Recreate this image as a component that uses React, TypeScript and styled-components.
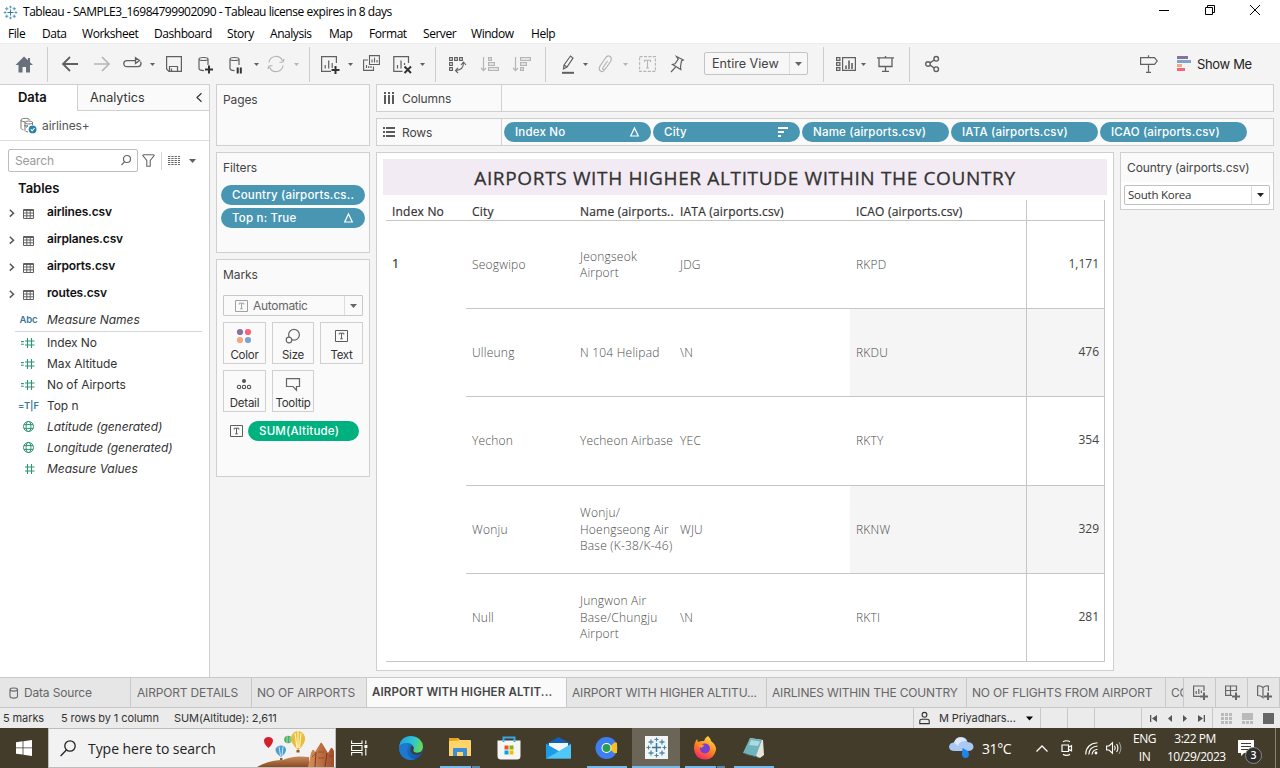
import React from "react";
import styled, { createGlobalStyle, css } from "styled-components";

const UI = '"Inter", "Liberation Sans", sans-serif';
const WIN = '"Open Sans", "Noto Sans", sans-serif';
const LINE = "#cfcfcf";
const BLUE = "#4996b2";
const GREEN = "#00b180";

const Global = createGlobalStyle`
  * { box-sizing: border-box; }
  html, body { margin: 0; padding: 0; overflow: hidden; }
  body { font-family: ${UI}; font-size: 12px; color: #333; background: #fff; }
  svg { display: block; flex: none; overflow: visible; }
`;

const Window = styled.div`
  width: 1280px;
  height: 768px;
  display: flex;
  flex-direction: column;
  background: #f4f4f4;
  white-space: nowrap;
  overflow: hidden;
`;

/* ---------- title bar and menu ---------- */
const TitleBar = styled.header`
  height: 24px;
  flex: none;
  display: flex;
  align-items: center;
  padding-left: 3px;
  background: #fff;
`;
const TitleText = styled.span`
  font: 12px/24px ${WIN};
  letter-spacing: -0.46px;
  color: #000;
  margin-left: 5px;
  flex: 1;
`;
const WindowButtons = styled.div`
  display: flex;
  gap: 35.5px;
  padding-right: 20px;
  margin-top: -4px;
`;
const MenuBar = styled.nav`
  height: 19px;
  flex: none;
  display: flex;
  background: #fff;
`;
const MenuItem = styled.span<{ $w: number }>`
  width: ${(p) => p.$w}px;
  font: 12px/19px ${WIN};
  letter-spacing: -0.45px;
  color: #000;
`;

/* ---------- toolbar ---------- */
const ToolBar = styled.div`
  height: 41px;
  flex: none;
  display: flex;
  align-items: center;
  border-top: 1px solid #ececec;
  background: #f4f4f4;
`;
const Tool = styled.span<{ $gap: number; $dim?: boolean }>`
  margin-left: ${(p) => p.$gap}px;
  color: ${(p) => (p.$dim ? "#b5b5b5" : "#606060")};
  flex: none;
`;
const Divider = styled.span<{ $gap: number }>`
  width: 1px;
  height: 35px;
  margin-left: ${(p) => p.$gap}px;
  background: #cdcdcd;
  flex: none;
`;
const FitSelect = styled.div`
  width: 104px;
  height: 23px;
  margin: -1px 0 0 20px;
  display: flex;
  border: 1px solid #c3c3c3;
  border-radius: 2px;
  background: #f7f7f7;
  font-size: 12.6px;
  line-height: 21px;
  color: #444;
  padding-left: 7px;
  flex: none;
`;
const FitLabel = styled.span`
  flex: 1;
`;
const SelectArrow = styled.span<{ $w: number; $dark?: boolean }>`
  width: ${(p) => p.$w}px;
  border-left: 1px solid #ddd;
  display: flex;
  align-items: center;
  justify-content: center;
  color: ${(p) => (p.$dark ? "#222" : "#666")};
`;
const ShowMe = styled.span`
  margin: -1px 0 0 6px;
  font-size: 13px;
  letter-spacing: -0.35px;
  color: #222;
`;

/* ---------- main area ---------- */
const Main = styled.main`
  height: 593px;
  flex: none;
  display: flex;
`;
const SidePane = styled.aside`
  width: 210px;
  flex: none;
  background: #fff;
  border-top: 1px solid ${LINE};
  border-right: 1px solid ${LINE};
`;
const PaneTabs = styled.div`
  display: flex;
  height: 26px;
`;
const ActivePaneTab = styled.div`
  width: 77px;
  padding-left: 18px;
  font-weight: 600;
  font-size: 13px;
  line-height: 25px;
  color: #111;
  letter-spacing: -0.1px;
`;
const PaneTab = styled.div`
  flex: 1;
  display: flex;
  align-items: center;
  justify-content: space-between;
  padding: 0 7px 0 12px;
  font-size: 12.6px;
  color: #333;
  background: #fafafa;
  border-left: 1px solid ${LINE};
  border-bottom: 1px solid ${LINE};
`;
const SourceRow = styled.div`
  height: 30px;
  display: flex;
  align-items: center;
  gap: 5px;
  padding-left: 20px;
  border-bottom: 1px solid #dedede;
  font-size: 12px;
  letter-spacing: -0.1px;
  color: #555;
`;
const SearchRow = styled.div`
  display: flex;
  align-items: center;
  padding: 8px 0 0 8px;
  color: #666;
`;
const SearchBox = styled.div`
  width: 130px;
  height: 23px;
  display: flex;
  align-items: center;
  justify-content: space-between;
  padding: 0 6px 0 6px;
  margin-right: 4px;
  border: 1px solid #bdbdbd;
  border-radius: 2px;
  color: #9a9a9a;
  font-size: 12px;
  letter-spacing: -0.15px;
`;
const Bar = styled.span`
  width: 1px;
  height: 18px;
  margin: 0 6px 0 6px;
  background: #d5d5d5;
`;
const TablesHeading = styled.h2`
  margin: 4px 0 0 18px;
  font-size: 13px;
  line-height: 24px;
  font-weight: 600;
  color: #111;
`;
const TableList = styled.div`
  padding-bottom: 1px;
`;
const TableItem = styled.div`
  height: 27px;
  display: flex;
  align-items: center;
  gap: 9px;
  padding-left: 9px;
  color: #606060;
`;
const TableName = styled.span`
  margin: -4px 0 0 4px;
  font-size: 12px;
  font-weight: 600;
  color: #111;
  letter-spacing: -0.15px;
`;
const Field = styled.div<{ $italic?: boolean }>`
  height: 21px;
  display: flex;
  align-items: center;
  font-size: 12px;
  letter-spacing: ${(p) => (p.$italic ? "-0.05px" : "-0.08px")};
  font-style: ${(p) => (p.$italic ? "italic" : "normal")};
  color: #333;
`;
const FieldIcon = styled.span<{ $color: string }>`
  width: 47px;
  display: flex;
  justify-content: center;
  padding-left: 10px;
  font: 600 9.5px ${UI};
  color: ${(p) => p.$color};
`;
const FieldRule = styled.div`
  height: 1px;
  margin: 1px 7px 0 15px;
  background: #d6d6d6;
`;

/* ---------- cards ---------- */
const CardColumn = styled.section`
  width: 154px;
  margin: 0 6px;
  flex: none;
  display: flex;
  flex-direction: column;
`;
const Card = styled.div<{ $h: number; $gap?: number }>`
  height: ${(p) => p.$h}px;
  margin-top: ${(p) => p.$gap ?? 0}px;
  border: 1px solid ${LINE};
  background: #fafafa;
`;
const CardTitle = styled.div`
  height: 32px;
  padding: 7px 0 0 6px;
  font-size: 12px;
  line-height: 16px;
  letter-spacing: -0.1px;
  color: #444;
`;
const Pill = styled.div<{ $w: number; $green?: boolean }>`
  width: ${(p) => p.$w}px;
  height: 20px;
  flex: none;
  display: flex;
  align-items: center;
  justify-content: space-between;
  padding: 0 12px 0 11px;
  border-radius: 10px;
  background: ${(p) => (p.$green ? GREEN : BLUE)};
  color: #fff;
  font-size: 11.5px;
  font-weight: 500;
  letter-spacing: 0.2px;
`;
const FilterPills = styled.div`
  display: flex;
  flex-direction: column;
  gap: 3px;
  padding-left: 4px;
`;
const MarkSelect = styled.div`
  width: 140px;
  height: 21px;
  margin: 3px 0 6px 6px;
  display: flex;
  align-items: center;
  border: 1px solid #c8c8c8;
  border-radius: 1px;
  padding-left: 11px;
  color: #666;
`;
const MarkType = styled.span`
  flex: 1;
  margin-left: 5px;
  letter-spacing: -0.3px;
`;
const MarkArrow = styled(SelectArrow)`
  align-self: stretch;
`;
const MarkGrid = styled.div`
  display: grid;
  grid-template-columns: 43px 42px 43px;
  grid-auto-rows: 42px;
  column-gap: 6px;
  row-gap: 6px;
  padding-left: 6px;
`;
const MarkButton = styled.div`
  display: flex;
  flex-direction: column;
  align-items: center;
  border: 1px solid ${LINE};
  padding-top: 4px;
  font-size: 11.5px;
  line-height: 15px;
  letter-spacing: -0.25px;
  color: #333;
  svg { margin: 0 1px 3px 0; }
`;
const MarkRow = styled.div`
  display: flex;
  align-items: center;
  gap: 5px;
  padding: 9px 0 0 13px;
`;

/* ---------- shelves ---------- */
const Work = styled.section`
  width: 898px;
  flex: none;
  display: flex;
  flex-direction: column;
  gap: 6px;
`;
const Shelf = styled.div`
  height: 28px;
  display: flex;
  border: 1px solid ${LINE};
  background: #fafafa;
`;
const ShelfName = styled.div`
  width: 125px;
  border-right: 1px solid ${LINE};
  display: flex;
  align-items: center;
  gap: 7px;
  padding-left: 6px;
  font-size: 12px;
  letter-spacing: -0.1px;
  color: #444;
`;
const ShelfPills = styled.div`
  display: flex;
  align-items: center;
  gap: 2px;
  padding-left: 2px;
`;
const ViewRow = styled.div`
  display: flex;
  align-items: flex-start;
  gap: 6px;
`;
const View = styled.div`
  width: 738px;
  height: 519px;
  border: 1px solid ${LINE};
  background: #fff;
  padding: 6px;
`;
const ViewTitle = styled.h1`
  margin: 0 0 5px;
  height: 36px;
  background: #f2ebf3;
  text-align: center;
  font: 500 19px/38px ${WIN};
  letter-spacing: 0.65px;
  -webkit-text-stroke: 0.3px #333;
  color: #333;
`;
const Grid = styled.div`
  display: grid;
  width: 719px;
  margin-left: 3px;
  grid-template-columns: 80px 108px 100px 176px 176px 79px;
  grid-template-rows: 21px 88px 88px 89px 88px 88px;
  font-family: ${WIN};
`;
const Head = styled.div<{ $value?: boolean }>`
  padding-left: 6px;
  font: 500 12px/24px ${WIN};
  letter-spacing: 0.2px;
  -webkit-text-stroke: 0.2px #333;
  color: #333;
  border-bottom: 1px solid #c6c6c6;
  ${(p) => p.$value && css`border-left: 1px solid #c6c6c6; border-right: 1px solid #c6c6c6;`}
`;
const IndexCell = styled.div`
  grid-row: 2 / 7;
  padding: 34px 0 0 6px;
  font: 500 12.5px/18px ${WIN};
  color: #333;
  -webkit-text-stroke: 0.2px #333;
  border-bottom: 1px solid #c6c6c6;
`;
const Cell = styled.div<{ $shade?: boolean; $value?: boolean }>`
  display: flex;
  align-items: center;
  padding: 1px 0 0 6px;
  font: 300 12px/16.5px ${WIN};
  letter-spacing: 0.22px;
  color: #4c4c4c;
  white-space: pre;
  border-bottom: 1px solid #c6c6c6;
  background: ${(p) => (p.$shade ? "#f5f5f5" : "transparent")};
  ${(p) => p.$value && css`
    justify-content: flex-end;
    padding: 0 5px 1px 0;
    font-weight: 400;
    letter-spacing: 0;
    color: #444;
    border-left: 1px solid #c6c6c6;
    border-right: 1px solid #c6c6c6;
  `}
`;
const FilterCard = styled.div`
  width: 154px;
  height: 58px;
  border: 1px solid ${LINE};
  background: #fff;
`;
const FilterTitle = styled.div`
  height: 29px;
  padding-left: 6px;
  background: #fafafa;
  line-height: 30px;
  letter-spacing: -0.1px;
  color: #444;
`;
const CountrySelect = styled.div`
  width: 146px;
  height: 20px;
  margin: 3px 0 0 3px;
  padding-left: 3px;
  display: flex;
  justify-content: space-between;
  border: 1px solid #c0c0c0;
  border-radius: 2px;
  font: 11.5px/18px ${WIN};
  letter-spacing: -0.25px;
  color: #333;
`;

/* ---------- sheet tabs and status ---------- */
const Sheets = styled.div`
  height: 31px;
  flex: none;
  display: flex;
  border-top: 1px solid #c8c8c8;
  border-bottom: 1px solid #c8c8c8;
  background: #e6e6e6;
`;
const Sheet = styled.div<{ $w: number; $pad?: number; $active?: boolean }>`
  width: ${(p) => p.$w}px;
  flex: none;
  display: flex;
  align-items: center;
  gap: 5px;
  padding-left: ${(p) => p.$pad ?? 5}px;
  overflow: hidden;
  border-right: 1px solid #c8c8c8;
  font-size: 12px;
  letter-spacing: -0.17px;
  color: #666;
  ${(p) => p.$active && css`
    background: #fafafa;
    color: #444;
    font-weight: 600;
    font-size: 11.5px;
    letter-spacing: 0.14px;
    padding-bottom: 2px;
  `}
`;
const Status = styled.div`
  height: 20px;
  flex: none;
  display: flex;
  background: #ebebeb;
  font-size: 11px;
  line-height: 20px;
  letter-spacing: -0.1px;
  color: #333;
`;
const StatusText = styled.span<{ $w: number; $pad?: number }>`
  width: ${(p) => p.$w}px;
  padding-left: ${(p) => p.$pad ?? 0}px;
`;
const StatusCell = styled.div<{ $w: number; $pad?: number; $gap?: number }>`
  width: ${(p) => p.$w}px;
  display: flex;
  align-items: center;
  gap: ${(p) => p.$gap ?? 0}px;
  padding-left: ${(p) => p.$pad ?? 0}px;
  border-left: 1px solid #c8c8c8;
`;
const UserName = styled.span`
  width: 78px;
  font-size: 11px;
`;

/* ---------- Windows taskbar ---------- */
const TaskBar = styled.footer`
  height: 40px;
  flex: none;
  display: flex;
  align-items: center;
  background: #433c2a;
  color: #fff;
  font-family: ${WIN};
`;
const StartButton = styled.div`
  width: 48px;
  display: flex;
  justify-content: center;
`;
const SearchField = styled.div`
  width: 288px;
  height: 40px;
  display: flex;
  align-items: center;
  padding-left: 11px;
  background: #f2f2f2;
  border: 1px solid #bdbdbd;
  color: #222;
  font-size: 14px;
`;
const SearchHint = styled.span`
  width: 167px;
  margin-left: 12px;
  letter-spacing: -0.05px;
`;
const TaskView = styled.div`
  width: 51px;
  padding-left: 15px;
`;
const Apps = styled.div`
  display: flex;
  gap: 1px;
`;
const TaskApp = styled.div<{ $active?: boolean }>`
  width: 48px;
  height: 40px;
  display: flex;
  flex-direction: column;
  align-items: center;
  justify-content: space-between;
  padding-top: 8px;
  background: ${(p) => (p.$active ? "#6b6557" : "transparent")};
`;
const Underline = styled.span<{ $w: number; $split?: boolean }>`
  width: ${(p) => p.$w}px;
  height: 2px;
  background: ${(p) => (p.$split ? "linear-gradient(90deg,#76b9ed 31px,#433c2a 31px,#433c2a 32px,#5a87aa 32px)" : "#76b9ed")};
`;
const Tray = styled.div`
  margin-left: auto;
  display: flex;
  align-items: center;
  height: 40px;
`;
const Temp = styled.span`
  width: 54px;
  margin-left: 8px;
  font-size: 14px;
  letter-spacing: -0.4px;
`;
const TrayText = styled.div<{ $w: number }>`
  width: ${(p) => p.$w}px;
  text-align: center;
  font-size: 12px;
  line-height: 18px;
  letter-spacing: -0.5px;
`;
const Notice = styled.div`
  position: relative;
  width: 37px;
`;
const Count = styled.span`
  position: absolute;
  left: 7px;
  top: 7px;
  width: 17px;
  height: 17px;
  border-radius: 9px;
  border: 1px solid #8a8a8a;
  background: #2f2f2f;
  color: #fff;
  font: 600 10.5px/15px ${WIN};
  text-align: center;
`;
const DesktopEdge = styled.span`
  width: 5px;
  height: 40px;
  border-left: 1px solid #888373;
`;

/* ---------- drawings ---------- */
type IconProps = { w: number; h?: number; sw?: number; children: React.ReactNode };
const Icon = ({ w, h = 20, sw = 1.2, children }: IconProps) => (
  <svg width={w} height={h} viewBox={`0 0 ${w} ${h}`} fill="none" stroke="currentColor" strokeWidth={sw}>
    {children}
  </svg>
);
const Caret = ({ w = 5, h = 3 }: { w?: number; h?: number }) => (
  <svg width={w} height={h} viewBox="0 0 10 6" preserveAspectRatio="none" fill="currentColor">
    <path d="M0 0H10L5 6Z" />
  </svg>
);
const TableauMark = ({ size }: { size: number }) => {
  const cross = (x: number, y: number, r: number) => `M${x - r} ${y}H${x + r}M${x} ${y - r}V${y + r}`;
  return (
    <svg width={size} height={size} viewBox="0 0 22 22" fill="none">
      <path d={cross(11, 11, 4.5)} stroke="#2f7ba3" strokeWidth="1.5" />
      <path d={cross(5.5, 5.5, 2.5) + cross(16.5, 5.5, 2.5) + cross(5.5, 16.5, 2.5) + cross(16.5, 16.5, 2.5)} stroke="#4c8fb0" strokeWidth="1.3" />
      <path d={cross(11, 3, 2) + cross(11, 19, 2) + cross(3, 11, 2) + cross(19, 11, 2)} stroke="#3f86ad" strokeWidth="1.1" />
    </svg>
  );
};
const Delta = () => (
  <Icon w={9} h={10} sw={1.2}><path d="M4.5 1L8.3 9H.7Z" /></Icon>
);
const TextMark = ({ dim }: { dim?: boolean }) => (
  <svg width="13" height="12" viewBox="0 0 13 12" fill="none" stroke={dim ? "#a0a0a0" : "#5c5c5c"}>
    <path d="M.5.5H12.5V11.5H.5ZM4.2 4.6V3.2H8.8V4.6M6.5 3.2V8.8M5.2 8.8H7.8" />
  </svg>
);
const Sheetgrid = () => (
  <Icon w={11} h={10} sw={1}><path d="M.5.5H10.5V9.5H.5ZM.5 1.5H10.5M.5 4H10.5M.5 6.8H10.5M3.8 2V9.5M7.2 2V9.5" /></Icon>
);
const Hash = ({ calc }: { calc?: boolean }) => (
  <Icon w={15} h={12} sw={1.1}>
    <path d="M6.5 1V11M10.5 1V11M4 4H13.5M4 8H13.5" />
    {calc && <path d="M0 4.6H2.8M0 7.2H2.8" />}
  </Icon>
);
const Globe = () => (
  <Icon w={11} h={11} sw={1}><circle cx="5.5" cy="5.5" r="5" /><ellipse cx="5.5" cy="5.5" rx="2.4" ry="5" /><path d="M1 3.6H10M1 7.4H10" /></Icon>
);
const Cylinder = "M1 5C1 3 10 3 10 5M1 5C1 7 10 7 10 5";

const Tools = () => (
  <ToolBar>
    <Tool $gap={15}>
      <svg width="18" height="20" viewBox="0 0 18 20" fill="#69707c"><path d="M9 2.5L13 6.3V4H15V8.2L18 11H15V18.5H11V13H7.5V18.5H3.5V11H.5Z" /></svg>
    </Tool>
    <Divider $gap={14} />
    <Tool $gap={14}><Icon w={16} sw={1.8}><path d="M.8 10H16M8 3L1 10L8 17" /></Icon></Tool>
    <Tool $gap={16} $dim><Icon w={16} sw={1.6}><path d="M0 10H15M8 3L15 10L8 17" /></Icon></Tool>
    <Tool $gap={13}><Icon w={19} sw={1.3}><path d="M11 12.6H4Q.8 12.6 .8 9.6T4 6.6H12.5M11 12.6H15Q18 12.6 18 9.6Q18 8.4 17.4 7.8M12.5 3.8V9.4L16.5 6.6Z" /></Icon></Tool>
    <Tool $gap={8}><Caret /></Tool>
    <Tool $gap={11}><Icon w={16}><path d="M.6 2.6H15.4V17.4H3L.6 15ZM3.5 17V12.5H11.5V17M5.5 14.5V17" /></Icon></Tool>
    <Tool $gap={16}><Icon w={16}><path d={Cylinder + "M1 5V14.5C1 16 3 16.5 6 16.6M10 5V11"} /><path d="M7 15.5H15M11 11.5V19.5" stroke="#333" strokeWidth="2" /></Icon></Tool>
    <Tool $gap={15}><Icon w={15}><path d={Cylinder + "M1 5V14.5C1 16 3 16.5 5.5 16.6M10 5V11"} /><path d="M8.7 13.5V19.5M11.8 13.5V19.5" stroke="#333" strokeWidth="2" /></Icon></Tool>
    <Tool $gap={10}><Caret /></Tool>
    <Tool $gap={8} $dim><Icon w={18}><path d="M2 8.5A7 7 0 0 1 15.5 7M16 11.5A7 7 0 0 1 2.5 13M12.5 8.5L16 8L17.2 5M5.5 11.5L2 12L.8 15" /></Icon></Tool>
    <Tool $gap={9} $dim><Caret /></Tool>
    <Divider $gap={10} />
    <Tool $gap={11}><Icon w={19}><path d="M15.4 9V2.6H.6V17.4H10M4.2 14.5V11M7.7 14.5V6.5M11.2 14V9" /><path d="M10.5 16H18.5M14.5 12V20" stroke="#333" strokeWidth="2" /></Icon></Tool>
    <Tool $gap={8}><Caret /></Tool>
    <Tool $gap={10}><Icon w={17} sw={1.1}><path d="M6.5 1.6H16.4V10.5H6.5ZM5 6H.6V16.4H10.5V12.5M9 8.5V5.5M11.5 8.5V3.8M14 8.5V6M3.5 14V11M5.7 14V12M8 14V12" /></Icon></Tool>
    <Tool $gap={13}><Icon w={19}><path d="M15.5 9V2.6H.8V17.4H9.5M4.5 14.5V11M8 14.5V6.5M11.5 11V9" /><path d="M11.5 12.5L18 19M18 12.5L11.5 19" stroke="#333" strokeWidth="2" /></Icon></Tool>
    <Tool $gap={8}><Caret /></Tool>
    <Divider $gap={10} />
    <Tool $gap={12}><Icon w={18} sw={1.1}><path d="M1.6 3.6H4.4V6.4H1.6ZM6.6 3.6H9.4V6.4H6.6ZM11.6 3.6H14.4V6.4H11.6ZM1.6 8.6H4.4V11.4H1.6ZM1.6 13.6H4.4V16.4H1.6ZM15.5 8.5Q15.5 16 8 16.5M13 11L15.5 8L18 11M10 14L7.5 16.5L10 19" /></Icon></Tool>
    <Tool $gap={15} $dim><Icon w={18} sw={1.2}><path d="M2.5 3V16.5M0 14L2.5 16.6L5 14M7.6 3.6H10.4V6.4H7.6ZM7.6 8.6H13.4V11.4H7.6ZM7.6 13.6H17.4V16.4H7.6Z" /></Icon></Tool>
    <Tool $gap={14} $dim><Icon w={18} sw={1.2}><path d="M2.5 3V16.5M0 14L2.5 16.6L5 14M7.6 3.6H17.4V6.4H7.6ZM7.6 8.6H13.4V11.4H7.6ZM7.6 13.6H10.4V16.4H7.6Z" /></Icon></Tool>
    <Divider $gap={14} />
    <Tool $gap={15}><Icon w={14} sw={1.2}><path d="M3 11L9.5 2L12 4L6 13L2.5 15ZM3 11L6 13" /><path d="M1 18.8H13" strokeWidth="2" /></Icon></Tool>
    <Tool $gap={8}><Caret /></Tool>
    <Tool $gap={10} $dim><Icon w={14} sw={1.2}><path d="M9.5 7L5 13.5Q4 15 5.5 15.5T8 14L12.5 7.5Q14.5 4 12 2.5T7.5 4L2 12Q.2 15.5 2.5 17T6.5 16" /></Icon></Tool>
    <Tool $gap={11} $dim><Caret /></Tool>
    <Tool $gap={11} $dim><Icon w={17} sw={1.1}><path d="M.6 2.6H16.4V17.4H.6Z" strokeDasharray="3 1.4" /><path d="M5.5 8V6.2H11.5V8M8.5 6V14M7 14H10" /></Icon></Tool>
    <Tool $gap={14}><Icon w={14} sw={1.2}><path d="M6.5 2.5L13.3 6L11.5 7L10.5 12.5L10.8 15.5L2.5 10.5L5 9.8L8.2 5.2ZM5.8 12.8L1 18" /></Icon></Tool>
    <FitSelect><FitLabel>Entire View</FitLabel><SelectArrow $w={18}><Caret w={7} h={4} /></SelectArrow></FitSelect>
    <Divider $gap={15} />
    <Tool $gap={12}><Icon w={20} sw={1.2}><path d="M.6 3.6H3.9V6.4H.6ZM.6 8.6H3.9V11.4H.6ZM.6 13.6H3.9V16.4H.6ZM6.6 3.6H19.4V16.4H6.6Z" /><path d="M10 15V11.5M13 15V6.5M16 15V9" strokeWidth="1.6" /></Icon></Tool>
    <Tool $gap={5}><Caret /></Tool>
    <Tool $gap={11}><Icon w={17} sw={1.3}><path d="M0 3.8H17M2 4V12.5H15V4M8.5 12.5V17.5M5 17.4H12M8.5 2V4" /></Icon></Tool>
    <Divider $gap={15} />
    <Tool $gap={15}><Icon w={15} sw={1.4}><circle cx="3" cy="10" r="2.3" /><circle cx="11.2" cy="4.8" r="2.3" /><circle cx="11.2" cy="15.2" r="2.3" /><path d="M5 8.8L9.2 6M5 11.2L9.2 14" /></Icon></Tool>
    <Tool $gap={200}><Icon w={18} sw={1.2}><path d="M.6 3.6H14.5L17.2 7L14.5 10.4H.6ZM8.5 1.2V3.6M8.5 10.4V18.4M6 18.4H11" /></Icon></Tool>
    <Tool $gap={19}>
      <svg width="14" height="20" viewBox="0 0 14 20"><path fill="#8872a0" d="M0 2H11V5H0Z" /><path fill="#7fa3cf" d="M0 6H14V9H0Z" /><path fill="#f7a57b" d="M0 10H5V13H0Z" /><path fill="#f9637b" d="M0 14H8V17H0Z" /></svg>
    </Tool>
    <ShowMe>Show Me</ShowMe>
  </ToolBar>
);

const tables = ["airlines.csv", "airplanes.csv", "airports.csv", "routes.csv"];
const TEAL = "#2c9670";
const NAVY = "#3a7a99";
const fields: [React.ReactNode, string, string, boolean][] = [
  [<Hash calc />, TEAL, "Index No", false],
  [<Hash calc />, TEAL, "Max Altitude", false],
  [<Hash calc />, TEAL, "No of Airports", false],
  ["=T|F", NAVY, "Top n", false],
  [<Globe />, TEAL, "Latitude (generated)", true],
  [<Globe />, TEAL, "Longitude (generated)", true],
  [<Hash />, TEAL, "Measure Values", true],
];

const DataPane = () => (
  <SidePane>
    <PaneTabs>
      <ActivePaneTab>Data</ActivePaneTab>
      <PaneTab>Analytics<Icon w={6} h={10} sw={1.2}><path d="M5.5 .3L1 4.5L5.5 8.7" /></Icon></PaneTab>
    </PaneTabs>
    <SourceRow>
      <svg width="17" height="17" viewBox="0 0 17 17" fill="none" stroke="#777">
        <path d="M1 3C1 .8 9.5 .8 9.5 3M1 3C1 4.6 4 4.8 5 4.8M1 3V11C1 12 2 12.6 3.5 12.8M5 5.5C5 3.6 12.5 3.6 12.5 5.5S5 7.4 5 5.5V13.5Q5.5 14.8 8 15M12.5 5.5V8M4 8.8H8M6 10.5L8 8.8" />
        <circle cx="12.6" cy="12.4" r="3.9" fill="#2d84a8" stroke="none" />
        <path d="M10.8 12.4L12.2 13.8L14.5 11" stroke="#fff" strokeWidth="1.1" />
      </svg>
      airlines+
    </SourceRow>
    <SearchRow>
      <SearchBox>Search<Icon w={10} h={11} sw={1.2}><circle cx="6" cy="4" r="3.5" stroke="#666" /><path d="M3.5 6.8L.5 10" stroke="#666" /></Icon></SearchBox>
      <Icon w={13} h={13} sw={1.1}><path d="M.8 1.5Q.8 .7 2 .7H11Q12.2 .7 12.2 1.5L8.2 6.5V12.3H4.8V6.5Z" /></Icon>
      <Bar />
      <Icon w={12} h={10} sw={1}><path d="M0 .5H12M0 2.5H12M0 4.5H12M0 6.5H12M0 8.5H12" strokeDasharray="2.3 1" /></Icon>
      <Tool $gap={9}><Caret w={7} h={4} /></Tool>
    </SearchRow>
    <TablesHeading>Tables</TablesHeading>
    <TableList>
      {tables.map((t) => (
        <TableItem key={t}>
          <Icon w={5} h={9} sw={1.5}><path d="M.8 .8L4.5 4.2L.8 7.6" stroke="#555" /></Icon>
          <Sheetgrid />
          <TableName>{t}</TableName>
        </TableItem>
      ))}
    </TableList>
    <Field $italic><FieldIcon $color={NAVY}>Abc</FieldIcon>Measure Names</Field>
    <FieldRule />
    {fields.map(([icon, color, name, italic]) => (
      <Field key={name} $italic={italic}><FieldIcon $color={color}>{icon}</FieldIcon>{name}</Field>
    ))}
  </SidePane>
);

const Cards = () => (
  <CardColumn>
    <Card $h={62}><CardTitle>Pages</CardTitle></Card>
    <Card $h={101} $gap={6}>
      <CardTitle>Filters</CardTitle>
      <FilterPills>
        <Pill $w={144}>Country (airports.cs..</Pill>
        <Pill $w={144}>Top n: True<Delta /></Pill>
      </FilterPills>
    </Card>
    <Card $h={218} $gap={6}>
      <CardTitle>Marks</CardTitle>
      <MarkSelect><TextMark dim /><MarkType>Automatic</MarkType><MarkArrow $w={18}><Caret w={7} h={4} /></MarkArrow></MarkSelect>
      <MarkGrid>
        <MarkButton>
          <svg width="16" height="18" viewBox="0 0 16 18"><circle cx="4" cy="5" r="3.1" fill="#8872a0" /><circle cx="12" cy="5" r="3.1" fill="#f9637b" /><circle cx="4" cy="13" r="3.1" fill="#f7a57b" /><circle cx="12" cy="13" r="3.1" fill="#7fa3cf" /></svg>
          Color
        </MarkButton>
        <MarkButton><Icon w={16} h={18}><circle cx="9" cy="7.8" r="5.4" stroke="#666" /><circle cx="4" cy="13" r="2.8" fill="#fafafa" stroke="#666" /></Icon>Size</MarkButton>
        <MarkButton><svg width="13" height="18" viewBox="0 -3 13 18"><g fill="none" stroke="#5c5c5c"><path d="M.5.5H12.5V11.5H.5ZM4.2 4.6V3.2H8.8V4.6M6.5 3.2V8.8M5.2 8.8H7.8" /></g></svg>Text</MarkButton>
        <MarkButton><Icon w={16} h={18} sw={1.1}><circle cx="8" cy="6" r="2" fill="#555" stroke="none" /><g stroke="#555"><circle cx="3" cy="12" r="1.7" /><circle cx="8" cy="12" r="1.7" /><circle cx="13" cy="12" r="1.7" /></g></Icon>Detail</MarkButton>
        <MarkButton><Icon w={16} h={18}><path stroke="#666" d="M1.5 3.6H14.5V11.5H11.5V15.2L8 11.5H1.5Z" /></Icon>Tooltip</MarkButton>
      </MarkGrid>
      <MarkRow><TextMark /><Pill $w={111} $green>SUM(Altitude)</Pill></MarkRow>
    </Card>
  </CardColumn>
);

const rows = [
  ["Seogwipo", "Jeongseok\nAirport", "JDG", "RKPD", "1,171"],
  ["Ulleung", "N 104 Helipad", "\\N", "RKDU", "476"],
  ["Yechon", "Yecheon Airbase", "YEC", "RKTY", "354"],
  ["Wonju", "Wonju/\nHoengseong Air\nBase (K-38/K-46)", "WJU", "RKNW", "329"],
  ["Null", "Jungwon Air\nBase/Chungju\nAirport", "\\N", "RKTI", "281"],
];

const Workspace = () => (
  <Work>
    <Shelf>
      <ShelfName><svg width="12" height="12" viewBox="0 0 12 12" fill="#5a5a5a"><path d="M1 0H3V2H1ZM5 0H7V2H5ZM9 0H11V2H9ZM1 3H3V12H1ZM5 3H7V12H5ZM9 3H11V12H9Z" /></svg>Columns</ShelfName>
    </Shelf>
    <Shelf>
      <ShelfName><svg width="12" height="11" viewBox="0 0 12 11" fill="#5a5a5a"><path d="M0 0H2V2H0ZM3 0H12V2H3ZM0 4H2V6H0ZM3 4H12V6H3ZM0 8H2V10H0ZM3 8H12V10H3Z" /></svg>Rows</ShelfName>
      <ShelfPills>
        <Pill $w={147}>Index No<Delta /></Pill>
        <Pill $w={147}>City<Icon w={10} h={10} sw={2}><path d="M0 1H10M0 5H6M0 9H3" /></Icon></Pill>
        <Pill $w={147}>Name (airports.csv)</Pill>
        <Pill $w={147}>IATA (airports.csv)</Pill>
        <Pill $w={147}>ICAO (airports.csv)</Pill>
      </ShelfPills>
    </Shelf>
    <ViewRow>
      <View>
        <ViewTitle>AIRPORTS WITH HIGHER ALTITUDE WITHIN THE COUNTRY</ViewTitle>
        <Grid>
          <Head>Index No</Head>
          <Head>City</Head>
          <Head>Name (airports..</Head>
          <Head>IATA (airports.csv)</Head>
          <Head>ICAO (airports.csv)</Head>
          <Head $value />
          <IndexCell>1</IndexCell>
          {rows.map(([city, name, iata, icao, alt], i) => (
            <React.Fragment key={icao}>
              <Cell>{city}</Cell>
              <Cell>{name}</Cell>
              <Cell>{iata}</Cell>
              <Cell $shade={i % 2 === 1}>{icao}</Cell>
              <Cell $shade={i % 2 === 1} $value>{alt}</Cell>
            </React.Fragment>
          ))}
        </Grid>
      </View>
      <FilterCard>
        <FilterTitle>Country (airports.csv)</FilterTitle>
        <CountrySelect>South Korea<SelectArrow $w={18} $dark><Caret w={7} h={4} /></SelectArrow></CountrySelect>
      </FilterCard>
    </ViewRow>
  </Work>
);

const SheetTabs = () => (
  <Sheets>
    <Sheet $w={131} $pad={9}><Icon w={10} h={12} sw={1.1}><path d="M1 2.5C1 .4 8.5 .4 8.5 2.5V9.5C8.5 11.6 1 11.6 1 9.5ZM1 2.5C1 4.6 8.5 4.6 8.5 2.5" /></Icon>Data Source</Sheet>
    <Sheet $w={121} $pad={6}>AIRPORT DETAILS</Sheet>
    <Sheet $w={115}>NO OF AIRPORTS</Sheet>
    <Sheet $w={200} $active>AIRPORT WITH HIGHER ALTIT...</Sheet>
    <Sheet $w={200}>AIRPORT WITH HIGHER ALTITU...</Sheet>
    <Sheet $w={200}>AIRLINES WITHIN THE COUNTRY</Sheet>
    <Sheet $w={199}>NO OF FLIGHTS FROM AIRPORT</Sheet>
    <Sheet $w={18}>CO</Sheet>
    <Sheet $w={32} $pad={9}><Icon w={15} h={15}><path d="M11 6V1H.6V11.4H7M3.2 9V6M5.8 9V4M8.4 8V5.5" /><path d="M7 11.5H15M11 7.5V15" strokeWidth="2" /></Icon></Sheet>
    <Sheet $w={32} $pad={9}><Icon w={15} h={15}><path d="M11.5 6V1H.6V10.4H7M.6 5.5H11.5M5.5 1V10.4" /><path d="M7 11.5H15M11 7.5V15" strokeWidth="2" /></Icon></Sheet>
    <Sheet $w={32} $pad={9}><Icon w={15} h={15}><path d="M6 2.5Q3.5 .5 .6 1V10.5Q4 10.5 6 12.5V2.5Q8.5 .5 11.4 1V6" /><path d="M7 11.5H15M11 7.5V15" strokeWidth="2" /></Icon></Sheet>
  </Sheets>
);

const StatusBar = () => (
  <Status>
    <StatusText $w={61} $pad={3}>5 marks</StatusText>
    <StatusText $w={113}>5 rows by 1 column</StatusText>
    <StatusText $w={739}>SUM(Altitude): 2,611</StatusText>
    <StatusCell $w={127} $pad={5} $gap={9}>
      <Icon w={11} h={13} sw={1.1}><circle cx="5.5" cy="2.8" r="2.4" /><path d="M.8 11.6V9Q.8 7.2 3 7.2H8Q10.2 7.2 10.2 9V11.6Z" /></Icon>
      <UserName>M Priyadhars...</UserName>
      <svg width="7" height="5" viewBox="0 0 7 5" fill="#000"><path d="M0 .5H7L3.5 4.5Z" /></svg>
    </StatusCell>
    <StatusCell $w={27} />
    <StatusCell $w={27} />
    <StatusCell $w={47} />
    <StatusCell $w={71} $pad={8} $gap={11}>
      <svg width="7" height="7" viewBox="0 0 7 7" fill="#555"><path d="M0 0H1.3V7H0ZM7 0V7L2 3.5Z" /></svg>
      <svg width="4" height="7" viewBox="0 0 4 7" fill="#555"><path d="M4 0V7L0 3.5Z" /></svg>
      <svg width="4" height="7" viewBox="0 0 4 7" fill="#555"><path d="M0 0V7L4 3.5Z" /></svg>
      <svg width="7" height="7" viewBox="0 0 7 7" fill="#555"><path d="M5.7 0H7V7H5.7ZM0 0V7L5 3.5Z" /></svg>
    </StatusCell>
    <StatusCell $w={67} $pad={8} $gap={10}>
      <svg width="11" height="11" viewBox="0 0 11 11" fill="#bababa"><path d="M0 0H3V3H0ZM4 0H7V3H4ZM8 0H11V3H8ZM0 4H3V7H0ZM4 4H7V7H4ZM8 4H11V7H8ZM0 8H3V11H0ZM4 8H7V11H4ZM8 8H11V11H8Z" /></svg>
      <svg width="11" height="11" viewBox="0 0 11 11" fill="#bababa"><path d="M0 0H11V7H0ZM0 8H3V11H0ZM4 8H7V11H4ZM8 8H11V11H8Z" /></svg>
      <svg width="11" height="11" viewBox="0 0 11 11" fill="#666"><path d="M0 0H11V11H0Z" /></svg>
    </StatusCell>
  </Status>
);

const Scenery = () => (
  <svg width="80" height="38" viewBox="0 0 80 38">
    <defs>
      <linearGradient id="sand" x1="0" y1="0" x2="0" y2="1"><stop offset="0" stopColor="#c98a5a" /><stop offset="1" stopColor="#8b4a25" /></linearGradient>
      <linearGradient id="rock" x1="0" y1="0" x2="1" y2="0"><stop offset="0" stopColor="#d9905c" /><stop offset="1" stopColor="#a04c28" /></linearGradient>
    </defs>
    <path d="M2 38Q14 31 28 31Q38 26 54 28V38Z" fill="url(#sand)" />
    <path d="M53 38L56 24Q58 18 60 23L65 15Q66 12 67.500 15L73 24L76 19Q77 18 79 22V38Z" fill="url(#rock)" />
    <path d="M61 23L60 38M72 24L70 38" stroke="#7d3c20" strokeWidth="1" />
    <path d="M57 28L60 25M63 23H69M63 29H69M74 27H78" stroke="#7d3c20" strokeWidth=".6" />
    <path d="M13.500 19Q8.500 15 9 11Q10 8 13.500 8T18 11Q18 15 13.500 19Z" fill="#d3202a" />
    <path d="M26 28Q20 24 20.500 20Q22 16.500 26 16.500T31 20Q31.500 24 26 28Z" fill="#4d9fd0" />
    <path d="M24 17.500L25.500 27M28 17.500L27 27" stroke="#c9e4f2" />
    <circle cx="33" cy="10.500" r="3.800" fill="#49ad62" /><path d="M32 7V14M35 8V13" stroke="#b4e0b0" />
    <path d="M43 21Q35 14 36 8Q38 2 43 2T50 8Q51 14 43.500 21Z" fill="#e6bd3f" />
    <path d="M40 4L42 19M46 4L44.500 19M43 2V19" stroke="#fff1b5" strokeWidth="1.2" />
    <path d="M41.500 21H44.500V23.500H41.500ZM25 29H27.500V31H25Z" fill="#8e5b32" />
  </svg>
);

const Edge = () => (
  <svg width="24" height="24" viewBox="0 0 24 24">
    <defs>
      <linearGradient id="eg" x1="0" y1=".3" x2="1" y2=".5"><stop offset="0" stopColor="#1fa2e0" /><stop offset=".6" stopColor="#32c6cc" /><stop offset="1" stopColor="#6bdc4c" /></linearGradient>
      <linearGradient id="eb" x1="0" y1="0" x2="1" y2="1"><stop offset="0" stopColor="#1b84d8" /><stop offset="1" stopColor="#0f4fa8" /></linearGradient>
    </defs>
    <circle cx="12" cy="12" r="12" fill="url(#eb)" />
    <path d="M.3 10Q2 0 12 0Q23.5 1 24 11Q23.5 16.5 18 16.8Q13 16.5 14.5 13.5Q15.5 8 9 7Q3 7 .3 10Z" fill="url(#eg)" />
    <path d="M14.6 12.8Q13 16.5 18 17Q21 17 23 15.5Q22 18 20 18.500Q13 19.500 11.500 15Q11 11 13 9.800Q15.5 11 14.6 12.8Z" fill="#433c2a" />
    <path d="M.3 10Q6 5 10 9.5Q6 15 10 20Q12 23 16 23.3Q8 25.5 3 20Q-.5 15.5 .3 10Z" fill="#1d78cf" />
  </svg>
);

const Taskbar = () => (
  <TaskBar>
    <StartButton><svg width="16" height="16" viewBox="0 0 16 16" fill="#fff"><path d="M0 2.2L6.6 1.3V7.5H0ZM7.4 1.2L16 0V7.5H7.4ZM0 8.3H6.6V14.6L0 13.7ZM7.4 8.3H16V16L7.4 14.8Z" /></svg></StartButton>
    <SearchField>
      <svg width="16" height="17" viewBox="0 0 16 17" fill="none" stroke="#222" strokeWidth="1.3"><circle cx="10" cy="6" r="5.2" /><path d="M6.4 10L.6 16" /></svg>
      <SearchHint>Type here to search</SearchHint>
      <Scenery />
    </SearchField>
    <TaskView><svg width="17" height="16" viewBox="0 0 17 16" fill="none" stroke="#fff" strokeWidth="1.1"><path d="M.6 .5V3.5H11V.5M.6 15.5V12.5H11V15.5M.6 5.5H11V10.5H.6ZM14.8 .5V4M14.8 8.5V15.5" /><path d="M13.4 5H16.4V8H13.4Z" fill="#fff" stroke="none" /></svg></TaskView>
    <Apps>
      <TaskApp><Edge /></TaskApp>
      <TaskApp>
        <svg width="22" height="22" viewBox="0 0 22 22"><path d="M0 3Q0 2 1 2H9L11 4H21Q22 4 22 5V20H0Z" fill="#ffd46b" /><path d="M0 5V3Q0 2 1 2H8L10 4.5Z" fill="#e8a317" /><path d="M4 20V13Q4 12 5 12H17Q18 12 18 13V20H14V16H8V20Z" fill="#3a8ed8" /></svg>
        <Underline $w={40} $split />
      </TaskApp>
      <TaskApp><svg width="24" height="24" viewBox="0 0 24 24"><path d="M6.5 6V1.5H17.5V6" fill="none" stroke="#35a7e8" strokeWidth="2" /><path d="M.5 4.5H23.5V20Q23.5 23.5 20 23.5H4Q.5 23.5 .5 20Z" fill="#f5f5f5" /><path d="M6.500 4.500V6M17.500 4.500V6" stroke="#35a7e8" strokeWidth="2" /><path d="M7.5 9.5H11.5V13.5H7.5Z" fill="#f25022" /><path d="M12.5 9.5H16.5V13.5H12.5Z" fill="#7fba00" /><path d="M7.5 14.5H11.5V18.5H7.5Z" fill="#00a4ef" /><path d="M12.5 14.5H16.5V18.5H12.5Z" fill="#ffb900" /></svg></TaskApp>
      <TaskApp><svg width="25" height="24" viewBox="0 0 25 24"><path d="M0 8L12.5 1L25 8V12H0Z" fill="#1062b8" /><path d="M3 7H22V15H3Z" fill="#f4f6f8" /><path d="M0 8L25 22.5H0Z" fill="#29a9ea" /><path d="M25 8L0 22.5H25Z" fill="#50c8f5" /><path d="M0 8L12.5 15L9 17.5L0 22.5Z" fill="#1e9be6" /></svg></TaskApp>
      <TaskApp>
        <svg width="24" height="24" viewBox="0 0 24 24"><circle cx="11.5" cy="12" r="11" fill="#3f7ef0" /><path d="M13 12L20 7H22V17H20Z" fill="#fbc116" /><path d="M17 8.500L19.500 6.500H21.500Q22.500 12 21.500 17H19L15 13Z" fill="#fbc116" /><circle cx="11.5" cy="12" r="5" fill="#fff" /><circle cx="11.5" cy="12" r="4" fill="#2b9f4d" /></svg>
        <Underline $w={40} />
      </TaskApp>
      <TaskApp $active>
        <svg width="23" height="23" viewBox="0 0 23 23"><path d="M0 0H23V23H0Z" fill="#f2f4f5" /><g transform="translate(.5 .5)"><TableauMark size={22} /></g></svg>
        <Underline $w={48} />
      </TaskApp>
      <TaskApp>
        <svg width="24" height="24" viewBox="0 0 24 24">
          <defs><linearGradient id="ff" x1=".8" y1="0" x2=".3" y2="1"><stop offset="0" stopColor="#ffe14a" /><stop offset=".5" stopColor="#ff8a1e" /><stop offset="1" stopColor="#f4246a" /></linearGradient></defs>
          <path d="M15 0Q18 3 18 5Q23.5 9 23 14Q21 23.5 12 23.5Q2 23 1 13Q1 7 4 3L5 6Q8 4.5 11 5Q12 1.5 15 0Z" fill="url(#ff)" />
          <circle cx="12" cy="12.5" r="5" fill="#7a3fd0" /><path d="M5 9Q9 7 11.5 10Q9 10 9 12Q7 12 5 9Z" fill="#ff9a2c" />
        </svg>
        <Underline $w={40} $split />
      </TaskApp>
      <TaskApp>
        <svg width="24" height="24" viewBox="0 0 24 24"><path d="M8 2L21 4L22 19L18 22L4 18Z" fill="#e7e4da" /><path d="M8 2L20 4L14 20L1 17Z" fill="#6fb4bd" /><path d="M9 4L18 5.5L16 10L7 9Z" fill="#a9dbe0" /><path d="M1 17L14 20L18 22L5 19Z" fill="#3d6b70" /></svg>
        <Underline $w={40} />
      </TaskApp>
    </Apps>
    <Tray>
      <svg width="25" height="22" viewBox="0 0 25 22"><path d="M6 14Q0 14 0 9.5Q1 5.5 5 5.5Q7 0 12 .3Q18 .5 18.5 5Q24.5 5.5 24.5 10Q24 14 19 14Z" fill="#a9c9f5" /><path d="M5 5.5Q7 0 12 .3Q16 .5 17 4Q10 4 9 9Z" fill="#dbe8fb" /><path d="M13.5 11L19 14Q21.5 20 17 21Q12.5 21 13 16Z" fill="#1c86f0" /></svg>
      <Temp>31°C</Temp>
      <svg width="12" height="7" viewBox="0 0 12 7" fill="none" stroke="#fff" strokeWidth="1.3"><path d="M.5 6.5L6 1L11.5 6.5" /></svg>
      <Tool $gap={13}><svg width="12" height="16" viewBox="0 0 12 16" fill="none" stroke="#fff" strokeWidth="1.2"><path d="M1 5H7.5V11.5H1ZM7.5 7.2L10.5 5.8V10.8L7.5 9.4M2 1.8Q5.5 -.3 9 1.8M2 14.4Q5.5 16.3 9 14.4" /></svg></Tool>
      <Tool $gap={12}><svg width="13" height="13" viewBox="0 0 13 13" fill="none" stroke="#fff" strokeWidth="1.1"><path d="M.7 12.5Q1 1.5 12.5 .7M3.8 12.5Q4 5 12.5 4M7 12.5Q7.5 8 12.5 7.3" /><circle cx="11" cy="11" r="1.4" fill="#fff" stroke="none" /></svg></Tool>
      <Tool $gap={8}><svg width="16" height="14" viewBox="0 0 16 14" fill="none" stroke="#fff" strokeWidth="1.1"><path d="M.6 5H3L6.5 1.8V12.2L3 9H.6ZM8.5 4.8Q10 7 8.5 9.2M10.6 3Q13.2 7 10.6 11" /><path d="M13 1.2Q16.8 7 13 12.8" stroke="#999" /></svg></Tool>
      <TrayText $w={45}>ENG<br />IN</TrayText>
      <TrayText $w={56}>3:22 PM<br />10/29/2023</TrayText>
      <Tool $gap={15}>
        <Notice><svg width="16" height="16" viewBox="0 0 16 16"><path d="M0 0H16V13H6L3 16V13H0Z" fill="#fff" /><path d="M3 3.5H13M3 6.5H13M3 9.5H10" stroke="#433c2a" /></svg><Count>3</Count></Notice>
      </Tool>
      <DesktopEdge />
    </Tray>
  </TaskBar>
);

export default function App() {
  return (
    <Window>
      <Global />
      <TitleBar>
        <TableauMark size={15} />
        <TitleText>Tableau - SAMPLE3_16984799902090 - Tableau license expires in 8 days</TitleText>
        <WindowButtons>
          <Icon w={10} h={10} sw={1}><path d="M0 5.5H10" stroke="#000" /></Icon>
          <Icon w={10} h={10} sw={1}><path d="M.5 2.5H7.5V9.5H.5ZM2.5 2.5V.5H9.5V7.5H7.5" stroke="#000" /></Icon>
          <Icon w={10} h={10} sw={1}><path d="M0 0L10 10M10 0L0 10" stroke="#000" /></Icon>
        </WindowButtons>
      </TitleBar>
      <MenuBar>
        <MenuItem $w={8} />
        <MenuItem $w={34}>File</MenuItem>
        <MenuItem $w={40}>Data</MenuItem>
        <MenuItem $w={72}>Worksheet</MenuItem>
        <MenuItem $w={73}>Dashboard</MenuItem>
        <MenuItem $w={43}>Story</MenuItem>
        <MenuItem $w={59}>Analysis</MenuItem>
        <MenuItem $w={40}>Map</MenuItem>
        <MenuItem $w={54}>Format</MenuItem>
        <MenuItem $w={48}>Server</MenuItem>
        <MenuItem $w={60}>Window</MenuItem>
        <MenuItem $w={40}>Help</MenuItem>
      </MenuBar>
      <Tools />
      <Main>
        <DataPane />
        <Cards />
        <Workspace />
      </Main>
      <SheetTabs />
      <StatusBar />
      <Taskbar />
    </Window>
  );
}
